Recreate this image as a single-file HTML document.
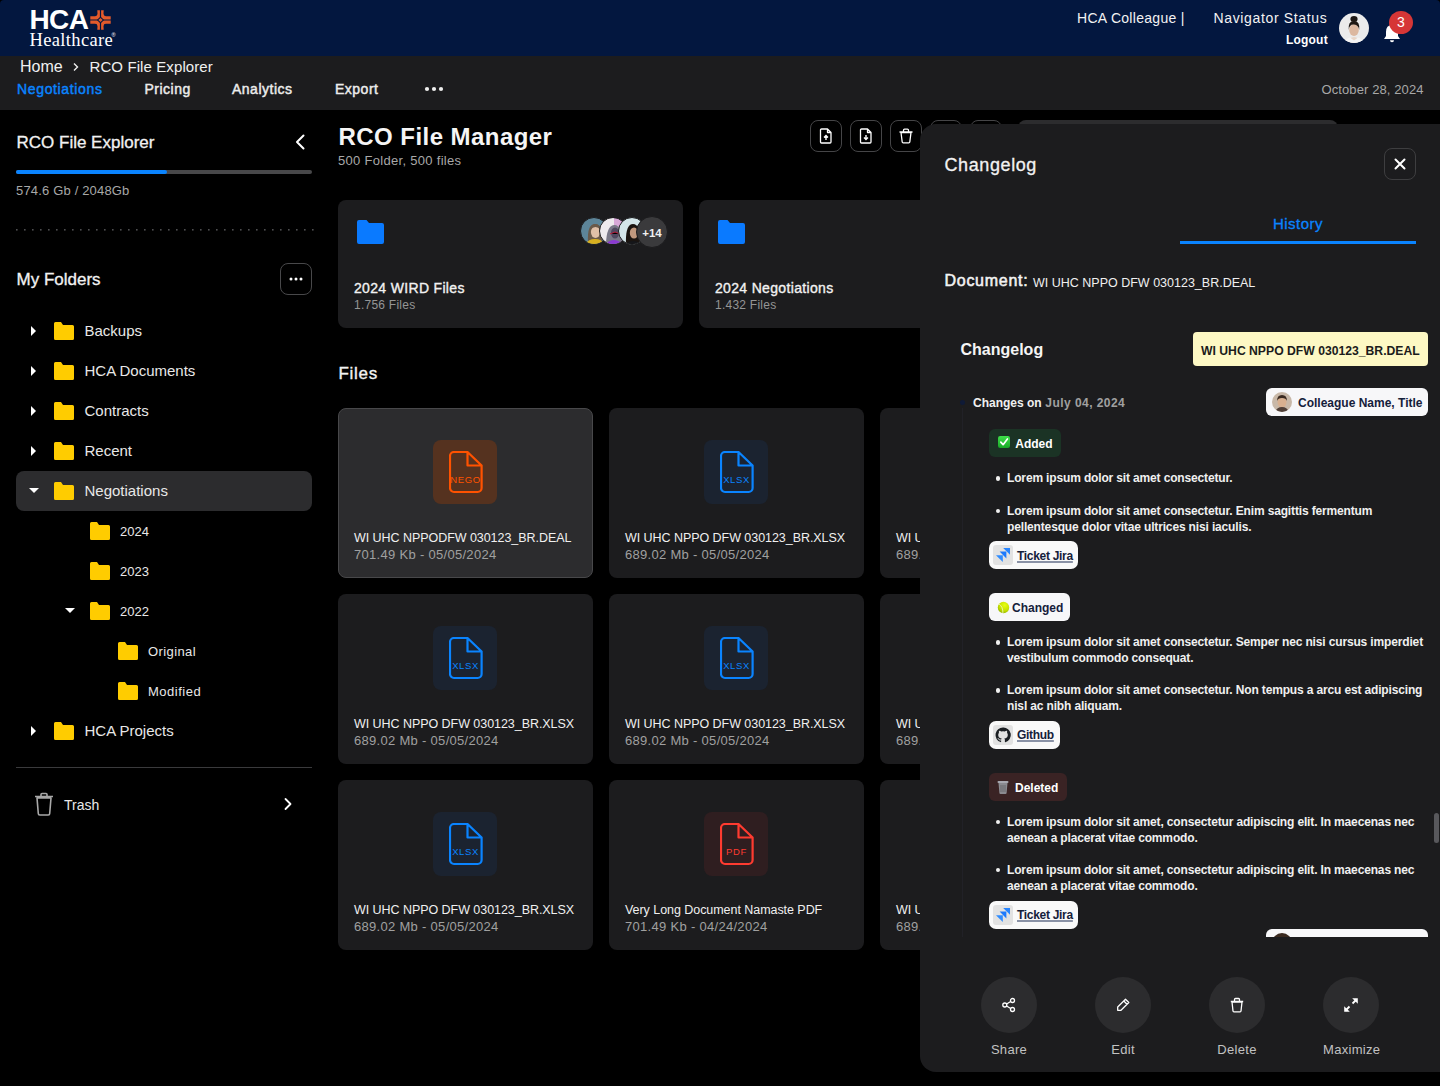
<!DOCTYPE html>
<html><head><meta charset="utf-8">
<style>
*{margin:0;padding:0;box-sizing:border-box}
html,body{width:1440px;height:1086px;overflow:hidden;background:#000;font-family:"Liberation Sans",sans-serif;color:#fff}
.a{position:absolute;white-space:nowrap;line-height:1}
#hdr{position:absolute;left:0;top:0;width:1440px;height:56px;background:#03173f;border-radius:4px 4px 0 0}
#sub{position:absolute;left:0;top:56px;width:1440px;height:54px;background:#1c1c1e}
.nav{font-size:14px;color:#ececec;top:82px;-webkit-text-stroke:0.45px currentColor}
.tri{position:absolute;width:0;height:0}
.tr{border-top:5px solid transparent;border-bottom:5px solid transparent;border-left:5.3px solid #fff}
.td{border-left:5px solid transparent;border-right:5px solid transparent;border-top:5.2px solid #fff}
.fi{position:absolute;width:20px;height:18px}
.tl{font-size:15px;color:#e8e8e8}
.tl2{font-size:13px;color:#e8e8e8}
.ib{top:120px;width:32px;height:32px;border:1.5px solid #454547;border-radius:8px}
.card{background:#1c1c1e;border-radius:8px}
.av{width:28px;height:28px;border-radius:50%;overflow:hidden;border:1px solid #1c1c1e}
.fc{width:255px;height:170px;background:#1c1c1e;border-radius:8px}
.fc.sel{background:#2c2c2e;border:1px solid #48484a}
.tile{width:64px;height:64px;border-radius:8px}
.tt{left:0.5px;width:64px;top:35.2px;text-align:center;font-size:9.5px;letter-spacing:0.6px}
.fn{font-size:12.5px;color:#f0f0f0;letter-spacing:-0.05px}
.fm{font-size:13px;color:#a0a0a0;letter-spacing:0.3px}
.cb{font-size:12px;font-weight:bold;color:#f0f0f0}
.badge{height:28px;border-radius:6px}
.lk{background:#f9f9f9;height:28px;border-radius:7px}
.ico{width:20px;height:20px;border-radius:3px;background:#e2e2e2}
.ul{color:#15203b;text-decoration:underline;text-decoration-color:#8a92a6;text-decoration-thickness:1.5px;text-underline-offset:1.2px;letter-spacing:-0.3px}
.dot{left:995.5px;width:4.5px;height:4.5px;border-radius:50%;background:#f0f0f0}
.li{left:1007px;font-size:12px;font-weight:bold;color:#f0f0f0;letter-spacing:-0.15px}
.act{top:977px;width:56px;height:56px;border-radius:50%;background:#2c2c2e}
.al{top:1043.3px;width:56px;text-align:center;font-size:13px;color:#c2c2c2;letter-spacing:0.3px}
</style></head><body>
<!-- HEADER -->
<div id="hdr">
  <div class="a" style="left:29.5px;top:6.3px;font-size:28px;font-weight:bold;letter-spacing:-0.6px">HCA</div>
  <svg class="a" style="left:90px;top:10px" width="21" height="20" viewBox="0 0 21 20">
    <path fill="#e35a2b" d="M7.3 0.3h6.4l-.2 3.5q0 2.4 2.4 2.4l4.8.1v7.4l-4.8.1q-2.4 0-2.4 2.4l.2 3.6h-6.4l.2-3.6q0-2.4-2.4-2.4L.3 13.7V6.3l4.8-.1q2.4 0 2.4-2.4z"/>
    <path stroke="#03173f" stroke-width="1.2" d="M10.5 0v20M0 10h21"/>
    <path fill="#03173f" d="M10.5 6.4L14.1 10L10.5 13.6L6.9 10z"/>
    <path fill="#e35a2b" d="M10.5 7.9L12.6 10L10.5 12.1L8.4 10z"/>
  </svg>
  <div class="a" style="left:29.5px;top:31.2px;font-family:'Liberation Serif',serif;font-size:18.5px;letter-spacing:0.35px">Healthcare</div>
  <div class="a" style="left:111.5px;top:33px;font-size:5.5px">®</div>
  <div class="a" style="left:1077px;top:11.2px;font-size:14px;color:#f2f2f2;letter-spacing:0.3px">HCA Colleague |</div>
  <div class="a" style="left:1213.5px;top:11.2px;font-size:14px;color:#f2f2f2;letter-spacing:0.65px">Navigator Status</div>
  <div class="a" style="left:1286px;top:33.8px;font-size:12px;font-weight:bold;color:#fff;letter-spacing:0.2px">Logout</div>
  <div class="a" style="left:1339px;top:13px;width:30px;height:30px;border-radius:50%;background:#ebebeb;overflow:hidden">
    <svg width="30" height="30" viewBox="0 0 30 30"><path d="M9 30q1-6 6-6t6 6z" fill="#e8d6c8"/><path d="M5 30q2-5 6-5.5l4 3 4-3q4 .5 6 5.5z" fill="#f4f4f4"/><ellipse cx="15" cy="17" rx="4.8" ry="6" fill="#dcb8a0"/><path d="M9.8 17q-1-9 5.2-9t5.2 9q-.5-5-5.2-5.5t-5.2 5.5z" fill="#1e1814"/><ellipse cx="15" cy="6" rx="3.6" ry="3" fill="#1e1814"/></svg>
  </div>
  <svg class="a" style="left:1383px;top:24px" width="18" height="19" viewBox="0 0 18 19"><path d="M9 1q6 0 6 7v4l2 3H1l2-3V8q0-7 6-7z" fill="#fff"/><path d="M7 16.2h4a2 2 0 0 1-4 0z" fill="#fff"/></svg>
  <div class="a" style="left:1389px;top:11px;width:24px;height:23px;border-radius:50%;background:#d63636;font-size:14px;text-align:center;line-height:23px">3</div>
</div>
<!-- SUB BAR -->
<div id="sub"></div>
<div class="a" style="left:20px;top:58.5px;font-size:16px;color:#f0f0f0">Home</div>
<svg class="a" style="left:72px;top:62px" width="8" height="10" viewBox="0 0 8 10"><path d="M2 1.5l3.5 3.5L2 8.5" stroke="#eee" stroke-width="1.4" fill="none"/></svg>
<div class="a" style="left:89.5px;top:59.3px;font-size:15px;color:#f0f0f0;letter-spacing:0.1px">RCO File Explorer</div>
<div class="a nav" style="left:17px;color:#0a84ff;letter-spacing:0.65px">Negotiations</div>
<div class="a nav" style="left:144.5px;letter-spacing:0.5px">Pricing</div>
<div class="a nav" style="left:232px;letter-spacing:0.5px">Analytics</div>
<div class="a nav" style="left:335px;letter-spacing:0.5px">Export</div>
<svg class="a" style="left:424px;top:86px" width="20" height="6" viewBox="0 0 20 6"><circle cx="3" cy="3" r="2.1" fill="#eee"/><circle cx="10" cy="3" r="2.1" fill="#eee"/><circle cx="17" cy="3" r="2.1" fill="#eee"/></svg>
<div class="a" style="left:1321.5px;top:83.3px;font-size:13px;color:#a8a8a8;letter-spacing:0.1px">October 28, 2024</div>

<!-- SIDEBAR -->
<div class="a" style="left:16.5px;top:133.8px;font-size:17px;color:#f2f2f2;-webkit-text-stroke:0.3px currentColor">RCO File Explorer</div>
<svg class="a" style="left:294px;top:134px" width="12" height="16" viewBox="0 0 12 16"><path d="M9.5 1.5L3 8l6.5 6.5" stroke="#fff" stroke-width="2" fill="none" stroke-linecap="round" stroke-linejoin="round"/></svg>
<div class="a" style="left:16px;top:170px;width:296px;height:4px;border-radius:2px;background:#48484a"></div>
<div class="a" style="left:16px;top:170px;width:151px;height:4px;border-radius:2px;background:#0a84ff"></div>
<div class="a" style="left:16px;top:184px;font-size:13px;color:#a8a8a8;letter-spacing:0.17px">574.6 Gb / 2048Gb</div>
<svg class="a" style="left:0;top:229.2px" width="330" height="2" viewBox="0 0 330 2"><g fill="#4e4e50"><rect x="16" y="0" width="1.6" height="1.6"/><rect x="24" y="0" width="1.6" height="1.6"/><rect x="32" y="0" width="1.6" height="1.6"/><rect x="40" y="0" width="1.6" height="1.6"/><rect x="48" y="0" width="1.6" height="1.6"/><rect x="56" y="0" width="1.6" height="1.6"/><rect x="64" y="0" width="1.6" height="1.6"/><rect x="72" y="0" width="1.6" height="1.6"/><rect x="80" y="0" width="1.6" height="1.6"/><rect x="88" y="0" width="1.6" height="1.6"/><rect x="96" y="0" width="1.6" height="1.6"/><rect x="104" y="0" width="1.6" height="1.6"/><rect x="112" y="0" width="1.6" height="1.6"/><rect x="120" y="0" width="1.6" height="1.6"/><rect x="128" y="0" width="1.6" height="1.6"/><rect x="136" y="0" width="1.6" height="1.6"/><rect x="144" y="0" width="1.6" height="1.6"/><rect x="152" y="0" width="1.6" height="1.6"/><rect x="160" y="0" width="1.6" height="1.6"/><rect x="168" y="0" width="1.6" height="1.6"/><rect x="176" y="0" width="1.6" height="1.6"/><rect x="184" y="0" width="1.6" height="1.6"/><rect x="192" y="0" width="1.6" height="1.6"/><rect x="200" y="0" width="1.6" height="1.6"/><rect x="208" y="0" width="1.6" height="1.6"/><rect x="216" y="0" width="1.6" height="1.6"/><rect x="224" y="0" width="1.6" height="1.6"/><rect x="232" y="0" width="1.6" height="1.6"/><rect x="240" y="0" width="1.6" height="1.6"/><rect x="248" y="0" width="1.6" height="1.6"/><rect x="256" y="0" width="1.6" height="1.6"/><rect x="264" y="0" width="1.6" height="1.6"/><rect x="272" y="0" width="1.6" height="1.6"/><rect x="280" y="0" width="1.6" height="1.6"/><rect x="288" y="0" width="1.6" height="1.6"/><rect x="296" y="0" width="1.6" height="1.6"/><rect x="304" y="0" width="1.6" height="1.6"/><rect x="312" y="0" width="1.6" height="1.6"/></g></svg>
<div class="a" style="left:16.5px;top:270.6px;font-size:17px;color:#f2f2f2;-webkit-text-stroke:0.3px currentColor">My Folders</div>
<div class="a" style="left:280px;top:263px;width:32px;height:32px;border:1.5px solid #48484a;border-radius:8px"></div>
<svg class="a" style="left:289px;top:277px" width="14" height="4" viewBox="0 0 14 4"><circle cx="2" cy="2" r="1.5" fill="#fff"/><circle cx="7" cy="2" r="1.5" fill="#fff"/><circle cx="12" cy="2" r="1.5" fill="#fff"/></svg>

<!-- tree -->
<div class="a" style="left:16px;top:471px;width:296px;height:40px;border-radius:8px;background:#2c2c2e"></div>
<div class="tri tr" style="left:31px;top:326px"></div>
<div class="tri tr" style="left:31px;top:366px"></div>
<div class="tri tr" style="left:31px;top:406px"></div>
<div class="tri tr" style="left:31px;top:446px"></div>
<div class="tri td" style="left:29px;top:488px"></div>
<div class="tri td" style="left:65px;top:608px"></div>
<div class="tri tr" style="left:31px;top:726px"></div>
<svg class="fi" style="left:54px;top:322px" viewBox="0 0 20 18"><path d="M1.5 0h5.5l2 3h9.5a1.5 1.5 0 0 1 1.5 1.5v12a1.5 1.5 0 0 1-1.5 1.5h-17A1.5 1.5 0 0 1 0 16.5V1.5A1.5 1.5 0 0 1 1.5 0z" fill="#ffcc00"/></svg>
<svg class="fi" style="left:54px;top:362px" viewBox="0 0 20 18"><path d="M1.5 0h5.5l2 3h9.5a1.5 1.5 0 0 1 1.5 1.5v12a1.5 1.5 0 0 1-1.5 1.5h-17A1.5 1.5 0 0 1 0 16.5V1.5A1.5 1.5 0 0 1 1.5 0z" fill="#ffcc00"/></svg>
<svg class="fi" style="left:54px;top:402px" viewBox="0 0 20 18"><path d="M1.5 0h5.5l2 3h9.5a1.5 1.5 0 0 1 1.5 1.5v12a1.5 1.5 0 0 1-1.5 1.5h-17A1.5 1.5 0 0 1 0 16.5V1.5A1.5 1.5 0 0 1 1.5 0z" fill="#ffcc00"/></svg>
<svg class="fi" style="left:54px;top:442px" viewBox="0 0 20 18"><path d="M1.5 0h5.5l2 3h9.5a1.5 1.5 0 0 1 1.5 1.5v12a1.5 1.5 0 0 1-1.5 1.5h-17A1.5 1.5 0 0 1 0 16.5V1.5A1.5 1.5 0 0 1 1.5 0z" fill="#ffcc00"/></svg>
<svg class="fi" style="left:54px;top:482px" viewBox="0 0 20 18"><path d="M1.5 0h5.5l2 3h9.5a1.5 1.5 0 0 1 1.5 1.5v12a1.5 1.5 0 0 1-1.5 1.5h-17A1.5 1.5 0 0 1 0 16.5V1.5A1.5 1.5 0 0 1 1.5 0z" fill="#ffcc00"/></svg>
<svg class="fi" style="left:90px;top:522px" viewBox="0 0 20 18"><path d="M1.5 0h5.5l2 3h9.5a1.5 1.5 0 0 1 1.5 1.5v12a1.5 1.5 0 0 1-1.5 1.5h-17A1.5 1.5 0 0 1 0 16.5V1.5A1.5 1.5 0 0 1 1.5 0z" fill="#ffcc00"/></svg>
<svg class="fi" style="left:90px;top:562px" viewBox="0 0 20 18"><path d="M1.5 0h5.5l2 3h9.5a1.5 1.5 0 0 1 1.5 1.5v12a1.5 1.5 0 0 1-1.5 1.5h-17A1.5 1.5 0 0 1 0 16.5V1.5A1.5 1.5 0 0 1 1.5 0z" fill="#ffcc00"/></svg>
<svg class="fi" style="left:90px;top:602px" viewBox="0 0 20 18"><path d="M1.5 0h5.5l2 3h9.5a1.5 1.5 0 0 1 1.5 1.5v12a1.5 1.5 0 0 1-1.5 1.5h-17A1.5 1.5 0 0 1 0 16.5V1.5A1.5 1.5 0 0 1 1.5 0z" fill="#ffcc00"/></svg>
<svg class="fi" style="left:118px;top:642px" viewBox="0 0 20 18"><path d="M1.5 0h5.5l2 3h9.5a1.5 1.5 0 0 1 1.5 1.5v12a1.5 1.5 0 0 1-1.5 1.5h-17A1.5 1.5 0 0 1 0 16.5V1.5A1.5 1.5 0 0 1 1.5 0z" fill="#ffcc00"/></svg>
<svg class="fi" style="left:118px;top:682px" viewBox="0 0 20 18"><path d="M1.5 0h5.5l2 3h9.5a1.5 1.5 0 0 1 1.5 1.5v12a1.5 1.5 0 0 1-1.5 1.5h-17A1.5 1.5 0 0 1 0 16.5V1.5A1.5 1.5 0 0 1 1.5 0z" fill="#ffcc00"/></svg>
<svg class="fi" style="left:54px;top:722px" viewBox="0 0 20 18"><path d="M1.5 0h5.5l2 3h9.5a1.5 1.5 0 0 1 1.5 1.5v12a1.5 1.5 0 0 1-1.5 1.5h-17A1.5 1.5 0 0 1 0 16.5V1.5A1.5 1.5 0 0 1 1.5 0z" fill="#ffcc00"/></svg>
<div class="a tl" style="left:84.5px;top:322.9px">Backups</div>
<div class="a tl" style="left:84.5px;top:362.9px">HCA Documents</div>
<div class="a tl" style="left:84.5px;top:402.9px">Contracts</div>
<div class="a tl" style="left:84.5px;top:442.9px">Recent</div>
<div class="a tl" style="left:84.5px;top:482.9px">Negotiations</div>
<div class="a tl2" style="left:120px;top:524.9px">2024</div>
<div class="a tl2" style="left:120px;top:564.9px">2023</div>
<div class="a tl2" style="left:120px;top:604.9px">2022</div>
<div class="a tl2" style="left:148px;top:644.9px;letter-spacing:0.4px">Original</div>
<div class="a tl2" style="left:148px;top:684.9px;letter-spacing:0.5px">Modified</div>
<div class="a tl" style="left:84.5px;top:722.9px">HCA Projects</div>
<div class="a" style="left:16px;top:767px;width:296px;height:1px;background:#3a3a3c"></div>
<svg class="a" style="left:33px;top:792px" width="22" height="24" viewBox="0 0 22 24"><path d="M4 6h14l-1.3 15.5a1.5 1.5 0 0 1-1.5 1.5H6.8a1.5 1.5 0 0 1-1.5-1.5z M2 4.5h18 M8 4V2.5a1 1 0 0 1 1-1h4a1 1 0 0 1 1 1V4" stroke="#a8a8a8" stroke-width="1.6" fill="none" stroke-linejoin="round"/></svg>
<div class="a" style="left:64px;top:797.5px;font-size:14px;color:#e8e8e8">Trash</div>
<svg class="a" style="left:283px;top:797px" width="10" height="14" viewBox="0 0 10 14"><path d="M2.5 2l5 5-5 5" stroke="#fff" stroke-width="1.8" fill="none" stroke-linecap="round" stroke-linejoin="round"/></svg>

<!--MAIN-->
<div class="a" style="left:338.5px;top:124.5px;font-size:24px;font-weight:bold;letter-spacing:0.45px;color:#f5f5f5">RCO File Manager</div>
<div class="a" style="left:338px;top:154px;font-size:13px;color:#a8a8a8;letter-spacing:0.3px">500 Folder, 500 files</div>
<div class="a ib" style="left:810px"></div>
<div class="a ib" style="left:850px"></div>
<div class="a ib" style="left:890px"></div>
<div class="a ib" style="left:930px"></div>
<div class="a ib" style="left:970px"></div>
<svg class="a" style="left:819px;top:128px" width="14" height="16" viewBox="0 0 14 16"><path d="M2.5 1h6l3.5 3.5v9.5a1 1 0 0 1-1 1h-8.5a1 1 0 0 1-1-1V2a1 1 0 0 1 1-1z M8.5 1v3.5h3.5" stroke="#fff" stroke-width="1.3" fill="none" stroke-linejoin="round"/><path d="M7 12V7.5M5 9.5l2-2 2 2" stroke="#fff" stroke-width="1.4" fill="none"/></svg>
<svg class="a" style="left:859px;top:128px" width="14" height="16" viewBox="0 0 14 16"><path d="M2.5 1h6l3.5 3.5v9.5a1 1 0 0 1-1 1h-8.5a1 1 0 0 1-1-1V2a1 1 0 0 1 1-1z M8.5 1v3.5h3.5" stroke="#fff" stroke-width="1.3" fill="none" stroke-linejoin="round"/><path d="M7 7v4.5M5 9.5l2 2 2-2" stroke="#fff" stroke-width="1.4" fill="none"/></svg>
<svg class="a" style="left:898px;top:128px" width="16" height="16" viewBox="0 0 16 16"><path d="M3 4.5h10l-1.2 9.5a1 1 0 0 1-1 .9H5.2a1 1 0 0 1-1-.9z M1.5 4h13 M5.5 4V2.2a1 1 0 0 1 1-1h3a1 1 0 0 1 1 1V4" stroke="#fff" stroke-width="1.3" fill="none" stroke-linejoin="round"/></svg>
<div class="a" style="left:1018px;top:120px;width:320px;height:32px;border-radius:8px;background:#2c2c2e"></div>

<div class="a card" style="left:338px;top:200px;width:345px;height:128px"></div>
<div class="a card" style="left:699px;top:200px;width:345px;height:128px"></div>
<svg class="a" style="left:356.5px;top:220px" width="27" height="24" viewBox="0 0 27 24"><path d="M2 0h7.5l2.5 3h13a2 2 0 0 1 2 2v17a2 2 0 0 1-2 2H2a2 2 0 0 1-2-2V2a2 2 0 0 1 2-2z" fill="#0a7aff"/></svg>
<svg class="a" style="left:717.5px;top:220px" width="27" height="24" viewBox="0 0 27 24"><path d="M2 0h7.5l2.5 3h13a2 2 0 0 1 2 2v17a2 2 0 0 1-2 2H2a2 2 0 0 1-2-2V2a2 2 0 0 1 2-2z" fill="#0a7aff"/></svg>
<div class="a av" style="left:580px;top:217px;background:#5d8599"><svg width="28" height="28" viewBox="0 0 28 28"><path d="M7 24q-1-18 7-18t7 18z" fill="#6a5a4a"/><ellipse cx="14.5" cy="14" rx="4.6" ry="6" fill="#e0c0a8"/><path d="M9.5 12q0-6 5-6t5 6q-2-3-5-3t-5 3z" fill="#6a5a4a"/><path d="M4 28q2-7 10-7t10 7z" fill="#d8b020"/></svg></div>
<div class="a av" style="left:599px;top:217px;background:linear-gradient(90deg,#eeeaee 0%,#eeeaee 55%,#d8a8d8 55%)"><svg width="28" height="28" viewBox="0 0 28 28"><path d="M6 28q0-20 8-21t8 21z" fill="#7a7888"/><ellipse cx="15" cy="15" rx="4" ry="5.5" fill="#504860"/><path d="M10 16l5-2 5 2" stroke="#c02040" stroke-width="1"/><path d="M5 28q3-6 9-6t9 6z" fill="#8a3ad0"/></svg></div>
<div class="a av" style="left:618px;top:217px;background:#d4e6ea"><svg width="28" height="28" viewBox="0 0 28 28"><path d="M7 28q-1-22 7-22t8 22z" fill="#1a1410"/><ellipse cx="15" cy="15" rx="4.2" ry="5.6" fill="#c0987e"/><path d="M5 28q3-5 9-5t9 5z" fill="#15161a"/></svg></div>
<div class="a" style="left:636px;top:216px;width:32px;height:32px;border-radius:50%;background:#3a3a3c;border:1.5px solid #1c1c1e;font-size:11.5px;font-weight:bold;text-align:center;line-height:33px;color:#f0f0f0">+14</div>
<div class="a" style="left:354px;top:281px;font-size:14px;color:#f2f2f2;letter-spacing:0.33px;-webkit-text-stroke:0.35px currentColor">2024 WIRD Files</div>
<div class="a" style="left:354px;top:298.8px;font-size:12px;color:#959595;letter-spacing:0.25px">1.756 Files</div>
<div class="a" style="left:715px;top:281px;font-size:14px;color:#f2f2f2;letter-spacing:0.33px;-webkit-text-stroke:0.35px currentColor">2024 Negotiations</div>
<div class="a" style="left:715px;top:298.8px;font-size:12px;color:#959595;letter-spacing:0.25px">1.432 Files</div>

<div class="a" style="left:338.5px;top:364.6px;font-size:17px;color:#f2f2f2;letter-spacing:0.7px;-webkit-text-stroke:0.35px currentColor">Files</div>

<!-- file cards -->
<div class="a fc sel" style="left:338px;top:408px"></div>
<div class="a fc" style="left:609px;top:408px"></div>
<div class="a fc" style="left:880px;top:408px"></div>
<div class="a fc" style="left:338px;top:594px"></div>
<div class="a fc" style="left:609px;top:594px"></div>
<div class="a fc" style="left:880px;top:594px"></div>
<div class="a fc" style="left:338px;top:780px"></div>
<div class="a fc" style="left:609px;top:780px"></div>
<div class="a fc" style="left:880px;top:780px"></div>
<div class="a tile" style="left:433px;top:440px;background:#55321f"><svg class="a" style="left:15.5px;top:11px" width="35" height="43" viewBox="0 0 35 43"><path d="M5 1H18.5L32.6 14.5V37A4 4 0 0 1 28.6 41H5A4 4 0 0 1 1 37V5A4 4 0 0 1 5 1Z M18.5 1V14.5H32.6" fill="none" stroke-width="2.2" stroke-linejoin="round"  stroke="#ff5200"/></svg><div class="a tt" style="color:#ff5200">NEGO</div></div>
<div class="a tile" style="left:704px;top:440px;background:#1b2330"><svg class="a" style="left:15.5px;top:11px" width="35" height="43" viewBox="0 0 35 43"><path d="M5 1H18.5L32.6 14.5V37A4 4 0 0 1 28.6 41H5A4 4 0 0 1 1 37V5A4 4 0 0 1 5 1Z M18.5 1V14.5H32.6" fill="none" stroke-width="2.2" stroke-linejoin="round"  stroke="#0a84ff"/></svg><div class="a tt" style="color:#0a84ff">XLSX</div></div>
<div class="a tile" style="left:433px;top:626px;background:#1b2330"><svg class="a" style="left:15.5px;top:11px" width="35" height="43" viewBox="0 0 35 43"><path d="M5 1H18.5L32.6 14.5V37A4 4 0 0 1 28.6 41H5A4 4 0 0 1 1 37V5A4 4 0 0 1 5 1Z M18.5 1V14.5H32.6" fill="none" stroke-width="2.2" stroke-linejoin="round"  stroke="#0a84ff"/></svg><div class="a tt" style="color:#0a84ff">XLSX</div></div>
<div class="a tile" style="left:704px;top:626px;background:#1b2330"><svg class="a" style="left:15.5px;top:11px" width="35" height="43" viewBox="0 0 35 43"><path d="M5 1H18.5L32.6 14.5V37A4 4 0 0 1 28.6 41H5A4 4 0 0 1 1 37V5A4 4 0 0 1 5 1Z M18.5 1V14.5H32.6" fill="none" stroke-width="2.2" stroke-linejoin="round"  stroke="#0a84ff"/></svg><div class="a tt" style="color:#0a84ff">XLSX</div></div>
<div class="a tile" style="left:433px;top:812px;background:#1b2330"><svg class="a" style="left:15.5px;top:11px" width="35" height="43" viewBox="0 0 35 43"><path d="M5 1H18.5L32.6 14.5V37A4 4 0 0 1 28.6 41H5A4 4 0 0 1 1 37V5A4 4 0 0 1 5 1Z M18.5 1V14.5H32.6" fill="none" stroke-width="2.2" stroke-linejoin="round"  stroke="#0a84ff"/></svg><div class="a tt" style="color:#0a84ff">XLSX</div></div>
<div class="a tile" style="left:704px;top:812px;background:#2f1e20"><svg class="a" style="left:15.5px;top:11px" width="35" height="43" viewBox="0 0 35 43"><path d="M5 1H18.5L32.6 14.5V37A4 4 0 0 1 28.6 41H5A4 4 0 0 1 1 37V5A4 4 0 0 1 5 1Z M18.5 1V14.5H32.6" fill="none" stroke-width="2.2" stroke-linejoin="round"  stroke="#ff3b30"/></svg><div class="a tt" style="color:#ff3b30">PDF</div></div>

<div class="a fn" style="left:354px;top:532.2px">WI UHC NPPODFW 030123_BR.DEAL</div>
<div class="a fm" style="left:354px;top:548px">701.49 Kb - 05/05/2024</div>
<div class="a fn" style="left:625px;top:532.2px">WI UHC NPPO DFW 030123_BR.XLSX</div>
<div class="a fm" style="left:625px;top:548px">689.02 Mb - 05/05/2024</div>
<div class="a fn" style="left:896px;top:532.2px">WI UHC NPPO DFW 030123_BR.XLSX</div>
<div class="a fm" style="left:896px;top:548px">689.02 Mb - 05/05/2024</div>
<div class="a fn" style="left:354px;top:718.2px">WI UHC NPPO DFW 030123_BR.XLSX</div>
<div class="a fm" style="left:354px;top:734px">689.02 Mb - 05/05/2024</div>
<div class="a fn" style="left:625px;top:718.2px">WI UHC NPPO DFW 030123_BR.XLSX</div>
<div class="a fm" style="left:625px;top:734px">689.02 Mb - 05/05/2024</div>
<div class="a fn" style="left:896px;top:718.2px">WI UHC NPPO DFW 030123_BR.XLSX</div>
<div class="a fm" style="left:896px;top:734px">689.02 Mb - 05/05/2024</div>
<div class="a fn" style="left:354px;top:904.2px">WI UHC NPPO DFW 030123_BR.XLSX</div>
<div class="a fm" style="left:354px;top:920px">689.02 Mb - 05/05/2024</div>
<div class="a fn" style="left:625px;top:904.2px">Very Long Document Namaste PDF</div>
<div class="a fm" style="left:625px;top:920px">701.49 Kb - 04/24/2024</div>
<div class="a fn" style="left:896px;top:904.2px">WI UHC NPPO DFW 030123_BR.XLSX</div>
<div class="a fm" style="left:896px;top:920px">689.02 Mb - 05/05/2024</div>

<!--PANEL-->
<div class="a" id="panel" style="left:920px;top:124px;width:520px;height:948px;background:#1c1c1e;border-radius:16px 0 0 16px"></div>
<div class="a" style="left:944.5px;top:155.8px;font-size:18px;color:#f2f2f2;letter-spacing:0.6px;-webkit-text-stroke:0.3px currentColor">Changelog</div>
<div class="a" style="left:1384px;top:148px;width:32px;height:32px;border:1.5px solid #3e3e40;border-radius:8px"></div>
<svg class="a" style="left:1394px;top:158px" width="12" height="12" viewBox="0 0 12 12"><path d="M1.5 1.5l9 9M10.5 1.5l-9 9" stroke="#fff" stroke-width="2" stroke-linecap="round"/></svg>
<div class="a" style="left:1180px;top:216.5px;width:236px;text-align:center;font-size:15px;color:#0a84ff;letter-spacing:0.5px;-webkit-text-stroke:0.3px currentColor;margin-top:-0.8px">History</div>
<div class="a" style="left:1180px;top:241px;width:236px;height:2.5px;background:#0a84ff"></div>
<div class="a" style="left:944.5px;top:273.2px;font-size:16px;color:#f2f2f2;letter-spacing:0.72px;-webkit-text-stroke:0.55px currentColor">Document:</div>
<div class="a" style="left:1033px;top:276.8px;font-size:12.5px;color:#f0f0f0">WI UHC NPPO DFW 030123_BR.DEAL</div>

<div class="a" style="left:920px;top:300px;width:520px;height:637px;overflow:hidden">
 <div style="position:absolute;left:-920px;top:-300px;width:1440px;height:1086px">
  <div class="a" style="left:960.5px;top:342.1px;font-size:16px;font-weight:bold;color:#f5f5f5">Changelog</div>
  <div class="a" style="left:1193px;top:332px;width:235px;height:34px;border-radius:4px;background:#fdf8c4"></div>
  <div class="a" style="left:1201px;top:344.7px;font-size:12.2px;font-weight:bold;color:#1b1b1b">WI UHC NPPO DFW 030123_BR.DEAL</div>
  <div class="a" style="left:960px;top:400px;width:5px;height:5px;border-radius:50%;background:#0f1a36"></div><div class="a" style="left:962px;top:408px;width:1px;height:540px;background:#212127"></div>
  <div class="a cb" style="left:973px;top:397.1px">Changes on</div>
  <div class="a cb" style="left:1045.3px;top:397.1px;color:#a0a0a0;letter-spacing:0.45px">July 04, 2024</div>
  <div class="a badge" style="left:1266px;top:388px;width:162px;background:#f7f7f9"></div>
  <div class="a" style="left:1272px;top:392px;width:20px;height:20px;border-radius:50%;background:#c8b8a8;overflow:hidden"><svg width="20" height="20" viewBox="0 0 20 20"><ellipse cx="10" cy="10" rx="4.5" ry="5.5" fill="#d8b090"/><path d="M5 9q0-6 5-6t5 6q-1-3-5-3t-5 3z" fill="#3a2a20"/><path d="M3 20q2-5 7-5t7 5z" fill="#504038"/></svg></div>
  <div class="a cb" style="left:1298px;top:397.1px;color:#15203b">Colleague Name, Title</div>

  <div class="a badge" style="left:989px;top:429px;width:72px;height:28px;background:#1b3325"></div>
  <svg class="a" style="left:997.5px;top:436px" width="12" height="12" viewBox="0 0 12 12"><defs><linearGradient id="gg" x1="0" y1="0" x2="0" y2="1"><stop offset="0" stop-color="#3ee04a"/><stop offset="1" stop-color="#19a828"/></linearGradient></defs><rect x="0" y="0" width="12" height="12" rx="2.2" fill="url(#gg)"/><path d="M2.8 6.2l2.3 2.5L9.4 3" stroke="#fff" stroke-width="1.7" fill="none" stroke-linecap="round" stroke-linejoin="round"/></svg>
  <div class="a cb" style="left:1015.3px;top:437.5px;color:#fff">Added</div>
  <div class="a dot" style="top:476px"></div>
  <div class="a li" style="top:472.2px">Lorem ipsum dolor sit amet consectetur.</div>
  <div class="a dot" style="top:508.5px"></div>
  <div class="a li" style="top:504.8px">Lorem ipsum dolor sit amet consectetur. Enim sagittis fermentum</div>
  <div class="a li" style="top:520.7px">pellentesque dolor vitae ultrices nisi iaculis.</div>
  <div class="a badge lk" style="left:989px;top:541px;width:89px"></div>
  <div class="a ico" style="left:993px;top:545px"><svg width="20" height="20" viewBox="0 0 20 20"><path d="M10.2 3H17v6.8z" fill="#2684ff"/><path d="M6.6 6.6h6.8v6.8z" fill="#1d7afc"/><path d="M3 10.2h6.8V17z" fill="#2f8cff"/></svg></div>
  <div class="a cb ul" style="left:1017px;top:549.8px">Ticket Jira</div>

  <div class="a badge" style="left:989px;top:593px;width:81px;height:28px;background:#f7f7f9"></div>
  <svg class="a" style="left:997px;top:601px" width="13" height="13" viewBox="0 0 13 13"><defs><radialGradient id="tg" cx="0.6" cy="0.3" r="0.8"><stop offset="0" stop-color="#e8ff10"/><stop offset="0.6" stop-color="#c4e000"/><stop offset="1" stop-color="#8aa800"/></radialGradient></defs><circle cx="6.5" cy="6.5" r="5.7" fill="url(#tg)"/><path d="M1.6 2.6q4.5 3 4.3 9.4" stroke="#f4f8d0" stroke-width="0.8" fill="none"/></svg>
  <div class="a cb" style="left:1012px;top:601.7px;color:#15203b">Changed</div>
  <div class="a dot" style="top:640px"></div>
  <div class="a li" style="top:636.4px">Lorem ipsum dolor sit amet consectetur. Semper nec nisi cursus imperdiet</div>
  <div class="a li" style="top:651.8px">vestibulum commodo consequat.</div>
  <div class="a dot" style="top:688px"></div>
  <div class="a li" style="top:684.2px">Lorem ipsum dolor sit amet consectetur. Non tempus a arcu est adipiscing</div>
  <div class="a li" style="top:700.1px">nisl ac nibh aliquam.</div>
  <div class="a badge lk" style="left:989px;top:721px;width:71px"></div>
  <div class="a ico" style="left:993px;top:725px"><svg width="20" height="20" viewBox="0 0 20 20"><path fill="#1b1f23" d="M10 2.5a7.5 7.5 0 0 0-2.37 14.62c.37.07.5-.16.5-.36v-1.3c-2.08.45-2.52-.9-2.52-.9-.34-.87-.83-1.1-.83-1.1-.68-.46.05-.45.05-.45.75.05 1.15.77 1.15.77.67 1.15 1.76.82 2.19.62.07-.48.26-.82.48-1-1.66-.19-3.41-.83-3.41-3.7 0-.82.29-1.49.77-2.01-.08-.19-.33-.95.07-1.98 0 0 .63-.2 2.06.77a7.1 7.1 0 0 1 3.75 0c1.43-.97 2.06-.77 2.06-.77.41 1.03.15 1.79.07 1.98.48.52.77 1.19.77 2.01 0 2.88-1.75 3.51-3.42 3.7.27.23.51.69.51 1.39v2.06c0 .2.13.44.51.36A7.5 7.5 0 0 0 10 2.5z"/></svg></div>
  <div class="a cb ul" style="left:1017px;top:729.2px">Github</div>

  <div class="a badge" style="left:989px;top:773px;width:78px;height:28px;background:#3a2324"></div>
  <svg class="a" style="left:997px;top:780px" width="12" height="14" viewBox="0 0 12 14"><path d="M1.5 3h9l-.9 10a1 1 0 0 1-1 .9H3.4a1 1 0 0 1-1-.9z" fill="#8a8a90"/><rect x="0.5" y="1" width="11" height="2" rx="1" fill="#a8a8b0"/><path d="M4 5v7M6 5v7M8 5v7" stroke="#5a5a60" stroke-width="0.7"/></svg>
  <div class="a cb" style="left:1015px;top:781.6px;color:#fff">Deleted</div>
  <div class="a dot" style="top:819.5px"></div>
  <div class="a li" style="top:815.8px">Lorem ipsum dolor sit amet, consectetur adipiscing elit. In maecenas nec</div>
  <div class="a li" style="top:831.8px">aenean a placerat vitae commodo.</div>
  <div class="a dot" style="top:867.5px"></div>
  <div class="a li" style="top:863.8px">Lorem ipsum dolor sit amet, consectetur adipiscing elit. In maecenas nec</div>
  <div class="a li" style="top:879.6px">aenean a placerat vitae commodo.</div>
  <div class="a badge lk" style="left:989px;top:901px;width:89px"></div>
  <div class="a ico" style="left:993px;top:905px"><svg width="20" height="20" viewBox="0 0 20 20"><path d="M10.2 3H17v6.8z" fill="#2684ff"/><path d="M6.6 6.6h6.8v6.8z" fill="#1d7afc"/><path d="M3 10.2h6.8V17z" fill="#2f8cff"/></svg></div>
  <div class="a cb ul" style="left:1017px;top:909px">Ticket Jira</div>
  <div class="a badge" style="left:1266px;top:929px;width:162px;background:#f7f7f9"></div>
  <div class="a" style="left:1272px;top:933px;width:20px;height:20px;border-radius:50%;background:#3a2a20"></div>
 </div>
</div>
<div class="a" style="left:1434px;top:813px;width:5px;height:30px;border-radius:3px;background:#58585c"></div>

<div class="a act" style="left:981px"></div>
<div class="a act" style="left:1095px"></div>
<div class="a act" style="left:1209px"></div>
<div class="a act" style="left:1323px"></div>
<svg class="a" style="left:1001px;top:997px" width="16" height="16" viewBox="0 0 16 16"><circle cx="11.5" cy="3.5" r="2" stroke="#fff" stroke-width="1.3" fill="none"/><circle cx="3.8" cy="8" r="2" stroke="#fff" stroke-width="1.3" fill="none"/><circle cx="11.5" cy="12.5" r="2" stroke="#fff" stroke-width="1.3" fill="none"/><path d="M5.6 7l4.1-2.5M5.6 9l4.1 2.5" stroke="#fff" stroke-width="1.3"/></svg>
<svg class="a" style="left:1115px;top:997px" width="16" height="16" viewBox="0 0 16 16"><path d="M10.5 2.2l3.3 3.3-7.8 7.8H2.7v-3.3z M8.8 4l3.2 3.2" stroke="#fff" stroke-width="1.3" fill="none" stroke-linejoin="round"/></svg>
<svg class="a" style="left:1229px;top:997px" width="16" height="16" viewBox="0 0 16 16"><path d="M3 5h10l-1 9a1 1 0 0 1-1 .9H5a1 1 0 0 1-1-.9z M1.8 4.5h12.4 M5.5 4.5V2.5a1 1 0 0 1 1-1h3a1 1 0 0 1 1 1v2" stroke="#fff" stroke-width="1.3" fill="none" stroke-linejoin="round"/></svg>
<svg class="a" style="left:1343px;top:997px" width="16" height="16" viewBox="0 0 16 16"><path d="M14.8 1.2v5.6l-5.6-5.6z M1.2 14.8v-5.6l5.6 5.6z" fill="#fff"/><path d="M13.5 2.5L9.5 6.5M2.5 13.5l4-4" stroke="#fff" stroke-width="1.8"/></svg>
<div class="a al" style="left:981px">Share</div>
<div class="a al" style="left:1095px">Edit</div>
<div class="a al" style="left:1209px">Delete</div>
<div class="a al" style="left:1323px">Maximize</div>

</body></html>
